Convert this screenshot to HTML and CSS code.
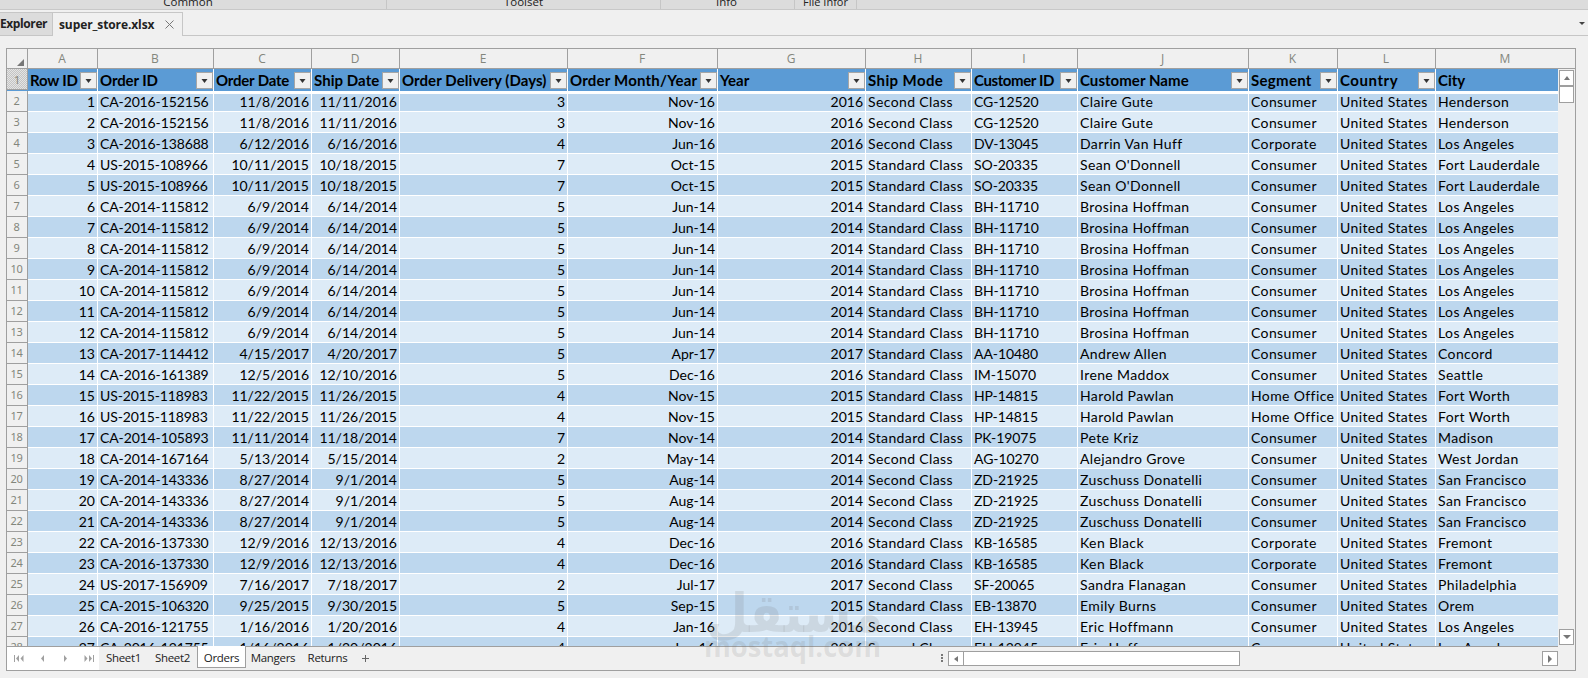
FILE: index.html
```html
<!DOCTYPE html>
<html lang="en">
<head>
<meta charset="utf-8">
<title>super_store.xlsx</title>
<link rel="stylesheet" href="styles.css">
</head>
<body>
<div class="ribbon">
  <div class="group g-common"><span>Common</span></div>
  <div class="group g-toolset"><span>Toolset</span></div>
  <div class="group g-info"><span>Info</span></div>
  <div class="group g-file"><span>File Infor</span></div>
</div>
<div class="doc-tabs">
  <div class="doc-tab explorer"><span>Explorer</span></div>
  <div class="doc-tab active"><span>super_store.xlsx</span>
    <svg class="close" width="9" height="9" viewBox="0 0 9 9"><path d="M.5.5l8 8M8.5.5l-8 8" stroke="#777" fill="none"/></svg>
  </div>
  <div class="tab-fill"><svg width="6" height="3" viewBox="0 0 6 3"><path d="M0 0h6L3 3z" fill="#444"/></svg></div>
</div>
<main class="sheet">
  <div class="letters" id="letters"></div>
  <div class="body">
    <div class="rows" id="rows"></div>
    <div class="vscroll">
      <div class="btn up"><svg width="6" height="4" viewBox="0 0 6 4"><path d="M0 4L3 0l3 4z" fill="#777"/></svg></div>
      <div class="vthumb"></div>
      <div class="btn down"><svg width="8" height="4" viewBox="0 0 8 4"><path d="M0 0h8L4 4z" fill="#777"/></svg></div>
    </div>
  </div>
  <div class="footer">
    <div class="nav">
      <svg width="10" height="7" viewBox="0 0 10 7"><path d="M0 0h1v7H0zM5 0v7L2 3.500zM9.500 0v7l-3-3.500z" fill="#a0a0a0"/></svg>
      <svg width="3" height="7" viewBox="0 0 3 7"><path d="M3 0v7L0 3.500z" fill="#a0a0a0"/></svg>
      <svg width="3" height="7" viewBox="0 0 3 7"><path d="M0 0v7l3-3.500z" fill="#a0a0a0"/></svg>
      <svg width="10" height="7" viewBox="0 0 10 7"><path d="M9 0h1v7H9zM.5 0v7l3-3.500zM5 0v7l3-3.500z" fill="#a0a0a0"/></svg>
    </div>
    <div class="sheet-tab s1">Sheet1</div>
    <div class="sheet-tab s2">Sheet2</div>
    <div class="sheet-tab current">Orders</div>
    <div class="sheet-tab s4">Mangers</div>
    <div class="sheet-tab s5">Returns</div>
    <svg class="plus" width="7" height="7" viewBox="0 0 7 7"><path d="M3 0h1v7H3zM0 3h7v1H0z" fill="#666"/></svg>
    <div class="hscroll">
      <svg class="dots" width="2" height="8" viewBox="0 0 2 8"><path d="M0 0h2v2H0zM0 3h2v2H0zM0 6h2v2H0z" fill="#777"/></svg>
      <div class="btn left"><svg width="4" height="6" viewBox="0 0 4 6"><path d="M4 0v6L0 3z" fill="#777"/></svg></div>
      <div class="hthumb"></div>
      <div class="btn right"><svg width="4" height="8" viewBox="0 0 4 8"><path d="M0 0v8l4-4z" fill="#777"/></svg></div>
    </div>
  </div>
</main>
<svg class="watermark" width="200" height="100" viewBox="0 0 200 100">
  <text class="wm-ar" x="11" y="57" textLength="177" lengthAdjust="spacingAndGlyphs">مستقل</text>
  <text class="wm-en" x="9" y="82" textLength="177" lengthAdjust="spacingAndGlyphs">mostaql.com</text>
</svg>
<script src="sheet.js"></script>
</body>
</html>
```
FILE: styles.css
```css
* { box-sizing: border-box; }
body {
  margin: 0;
  width: 1588px;
  height: 678px;
  overflow: hidden;
  background: #f0f0f0;
  font-family: "Open Sans", "Noto Sans", sans-serif;
  color: #222;
  position: relative;
}
svg { display: block; flex: none; }

.ribbon {
  display: flex;
  height: 10px;
  background: #dcdcdc;
  border-bottom: 1px solid #c8c8c8;
  overflow: hidden;
}
.group {
  display: flex;
  justify-content: center;
  align-items: flex-end;
  height: 9px;
  border-right: 1px solid #c6c6c6;
  font-size: 11.5px;
  line-height: 15px;
}
.g-common { width: 387px; padding-right: 10px; }
.g-toolset { width: 274px; }
.g-info { width: 134px; padding-right: 2px; }
.g-file { width: 62px; font-size: 11px; white-space: nowrap; }

.doc-tabs { display: flex; height: 26px; padding-top: 2px; font-size: 12px; font-weight: 700; line-height: 24px; }
.doc-tab { border: 1px solid #c6c6c6; display: flex; align-items: center; white-space: nowrap; }
.explorer { width: 53px; background: #dcdcdc; border-left: 0; letter-spacing: -.4px; }
.active { width: 130px; border-left: 0; border-bottom: 0; padding-left: 6px; letter-spacing: -.1px; justify-content: space-between; padding-right: 8px; }
.tab-fill { flex: 1; border-bottom: 1px solid #c6c6c6; display: flex; justify-content: flex-end; padding: 10px 3px 0 0; }

.sheet {
  width: 1570px;
  height: 623px;
  margin: 12px 0 0 6px;
  border: 1px solid #9f9f9f;
  background: #f0f0f0;
}
.letters, .row {
  display: grid;
  grid-template-columns: 21px 70px 116px 98px 88px 168px 150px 148px 106px 106px 171px 89px 98px 1fr;
}
.letters { height: 20px; border-bottom: 1px solid #9f9f9f; font-size: 12px; line-height: 20px; color: #83867c; text-align: center; }
.letters > div { border-right: 1px solid #9f9f9f; padding-right: 1px; }
.letters > div:last-child { border-right: 0; }
.letters > .corner { display: flex; justify-content: flex-end; align-items: flex-end; padding: 0 3px 3px 0; }

.body { display: flex; height: 577px; }
.rows { width: 1551px; height: 578px; overflow: hidden; border-bottom: 1px solid #9f9f9f; }
.row { height: 21px; font: 14px/22px Lato, "Open Sans", sans-serif; color: #000; }
.row:nth-child(even) { background: #bdd7ee; }
.row:nth-child(odd) { background: #ddebf7; }
.row > div { border-right: 1px solid #fff; border-bottom: 1px solid #fff; padding: 0 2px; white-space: nowrap; overflow: hidden; letter-spacing: .38px; }
.row > div:last-child { border-right: 0; }
.row > .num { text-align: right; letter-spacing: 0; }
.row > .c1 { letter-spacing: -.13px; }
.row > .c8 { letter-spacing: -.08px; }
.row > .head {
  background: #f0f0f0;
  border-right: 1px solid #9f9f9f;
  border-bottom: 1px solid #9f9f9f;
  font: 11px/20px "Noto Sans", sans-serif;
  color: #83867c;
  text-align: center;
  padding: 0 1px 0 0;
  letter-spacing: -.3px;
}
.row.titles { height: 22px; background: #5b9bd5; font-weight: 700; font-size: 15px; }
.row.titles > div { display: flex; justify-content: space-between; border-bottom: 3px solid #fff; padding: 0 0 0 2px; line-height: 22px; overflow: visible; }
.row.titles > .head {
  justify-content: center;
  padding: 0;
  border-bottom: 1px solid #9f9f9f;
  line-height: 21px;
  height: 21px;
  background: repeating-conic-gradient(#c4c4c4 0 25%, #e4e4e4 0 50%) 0 0 / 2px 2px;
}
.row.titles > .t0 { letter-spacing: -.2px; }
.row.titles > .t1 { letter-spacing: -.1px; }
.row.titles > .t2 { letter-spacing: -.2px; }
.row.titles > .t3 { letter-spacing: .05px; }
.row.titles > .t4 { letter-spacing: .07px; }
.row.titles > .t5 { letter-spacing: .2px; }
.row.titles > .t6 { letter-spacing: 0; }
.row.titles > .t7 { letter-spacing: .4px; }
.row.titles > .t8 { letter-spacing: -.4px; }
.row.titles > .t9 { letter-spacing: .05px; }
.row.titles > .t10 { letter-spacing: .3px; }
.row.titles > .t11 { letter-spacing: .55px; }
.row.titles > .t12 { letter-spacing: 0; }
.filter {
  width: 17px;
  height: 17px;
  margin-top: 3px;
  border: 1px solid #a6a6a6;
  background: #f0f0f0;
  display: flex;
  align-items: center;
  justify-content: center;
  flex: none;
}

.vscroll { width: 17px; padding: 1px 0 0 1px; display: flex; flex-direction: column; height: 577px; }
.btn { display: flex; align-items: center; justify-content: center; width: 15px; height: 16px; background: #fff; border: 1px solid #9f9f9f; }
.vthumb { width: 15px; height: 17px; background: #fff; border: 1px solid #9f9f9f; }
.down { margin: auto 0 1px; }

.footer { display: flex; height: 24px; padding-top: 1px; font-size: 11.5px; line-height: 21px; }
.nav { width: 92px; background: #fff; display: flex; align-items: center; padding-left: 7px; }
.nav svg:nth-child(2) { margin-left: 17px; }
.nav svg:nth-child(3) { margin-left: 20px; }
.nav svg:nth-child(4) { margin-left: 17px; }
.sheet-tab { white-space: nowrap; text-align: center; letter-spacing: -.3px; }
.s1 { width: 49px; }
.s2 { width: 49px; }
.current { width: 49px; height: 22px; margin-top: -1px; line-height: 23px; background: #fff; border: 1px solid #9f9f9f; border-top: 0; position: relative; }
.s4 { width: 54px; }
.s5 { width: 55px; }
.plus { margin: 8px 0 0 7px; }
.hscroll { margin-left: auto; display: flex; padding: 4px 17px 0 0; }
.dots { margin: 3px 5px 0 0; }
.hscroll .btn { width: 16px; height: 15px; }
.hthumb { width: 277px; height: 15px; margin-left: -1px; background: #fff; border: 1px solid #9f9f9f; }
.hscroll .right { margin-left: 302px; }

.watermark { position: absolute; left: 695px; top: 575px; fill: rgba(120, 120, 120, .17); }
.wm-ar { font: bold 54px "DejaVu Sans", sans-serif; direction: ltr; }
.wm-en { font: bold 28px "Open Sans", sans-serif; }
```
FILE: sheet.js
```js
const titles = ["Row ID", "Order ID", "Order Date", "Ship Date", "Order Delivery (Days)", "Order Month/Year", "Year", "Ship Mode", "Customer ID", "Customer Name", "Segment", "Country", "City"];
const numeric = [0, 2, 3, 4, 5, 6];
const orders = `CA-2016-152156|11/8/2016|11/11/2016|3|Nov-16|Second|CG-12520|Claire Gute|Consumer|Henderson
CA-2016-152156|11/8/2016|11/11/2016|3|Nov-16|Second|CG-12520|Claire Gute|Consumer|Henderson
CA-2016-138688|6/12/2016|6/16/2016|4|Jun-16|Second|DV-13045|Darrin Van Huff|Corporate|Los Angeles
US-2015-108966|10/11/2015|10/18/2015|7|Oct-15|Standard|SO-20335|Sean O'Donnell|Consumer|Fort Lauderdale
US-2015-108966|10/11/2015|10/18/2015|7|Oct-15|Standard|SO-20335|Sean O'Donnell|Consumer|Fort Lauderdale
CA-2014-115812|6/9/2014|6/14/2014|5|Jun-14|Standard|BH-11710|Brosina Hoffman|Consumer|Los Angeles
CA-2014-115812|6/9/2014|6/14/2014|5|Jun-14|Standard|BH-11710|Brosina Hoffman|Consumer|Los Angeles
CA-2014-115812|6/9/2014|6/14/2014|5|Jun-14|Standard|BH-11710|Brosina Hoffman|Consumer|Los Angeles
CA-2014-115812|6/9/2014|6/14/2014|5|Jun-14|Standard|BH-11710|Brosina Hoffman|Consumer|Los Angeles
CA-2014-115812|6/9/2014|6/14/2014|5|Jun-14|Standard|BH-11710|Brosina Hoffman|Consumer|Los Angeles
CA-2014-115812|6/9/2014|6/14/2014|5|Jun-14|Standard|BH-11710|Brosina Hoffman|Consumer|Los Angeles
CA-2014-115812|6/9/2014|6/14/2014|5|Jun-14|Standard|BH-11710|Brosina Hoffman|Consumer|Los Angeles
CA-2017-114412|4/15/2017|4/20/2017|5|Apr-17|Standard|AA-10480|Andrew Allen|Consumer|Concord
CA-2016-161389|12/5/2016|12/10/2016|5|Dec-16|Standard|IM-15070|Irene Maddox|Consumer|Seattle
US-2015-118983|11/22/2015|11/26/2015|4|Nov-15|Standard|HP-14815|Harold Pawlan|Home Office|Fort Worth
US-2015-118983|11/22/2015|11/26/2015|4|Nov-15|Standard|HP-14815|Harold Pawlan|Home Office|Fort Worth
CA-2014-105893|11/11/2014|11/18/2014|7|Nov-14|Standard|PK-19075|Pete Kriz|Consumer|Madison
CA-2014-167164|5/13/2014|5/15/2014|2|May-14|Second|AG-10270|Alejandro Grove|Consumer|West Jordan
CA-2014-143336|8/27/2014|9/1/2014|5|Aug-14|Second|ZD-21925|Zuschuss Donatelli|Consumer|San Francisco
CA-2014-143336|8/27/2014|9/1/2014|5|Aug-14|Second|ZD-21925|Zuschuss Donatelli|Consumer|San Francisco
CA-2014-143336|8/27/2014|9/1/2014|5|Aug-14|Second|ZD-21925|Zuschuss Donatelli|Consumer|San Francisco
CA-2016-137330|12/9/2016|12/13/2016|4|Dec-16|Standard|KB-16585|Ken Black|Corporate|Fremont
CA-2016-137330|12/9/2016|12/13/2016|4|Dec-16|Standard|KB-16585|Ken Black|Corporate|Fremont
US-2017-156909|7/16/2017|7/18/2017|2|Jul-17|Second|SF-20065|Sandra Flanagan|Consumer|Philadelphia
CA-2015-106320|9/25/2015|9/30/2015|5|Sep-15|Standard|EB-13870|Emily Burns|Consumer|Orem
CA-2016-121755|1/16/2016|1/20/2016|4|Jan-16|Second|EH-13945|Eric Hoffmann|Consumer|Los Angeles
CA-2016-121755|1/16/2016|1/20/2016|4|Jan-16|Second|EH-13945|Eric Hoffmann|Consumer|Los Angeles`.split("\n");

const corner = '<div class="corner"><svg width="7" height="7" viewBox="0 0 7 7"><path d="M7 0v7H0z" fill="#777"/></svg></div>';
document.getElementById("letters").innerHTML =
  corner + [..."ABCDEFGHIJKLM"].map(c => `<div>${c}</div>`).join("");

const arrow = '<div class="filter"><svg width="7" height="4" viewBox="0 0 7 4"><path d="M.5 0h6L3.500 4z" fill="#333"/></svg></div>';
let html = '<div class="row titles"><div class="head">1</div>' +
  titles.map((t, i) => `<div class="t${i}"><span>${t}</span>${i < 12 ? arrow : ""}</div>`).join("") + "</div>";

orders.forEach((line, n) => {
  const [id, date, ship, days, month, mode, cust, name, seg, city] = line.split("|");
  const cells = [n + 1, id, date, ship, days, month, id.slice(3, 7), mode + " Class", cust, name, seg, "United States", city];
  html += `<div class="row"><div class="head">${n + 2}</div>` +
    cells.map((c, i) => `<div class="c${i}${numeric.includes(i) ? " num" : ""}">${c}</div>`).join("") + "</div>";
});
document.getElementById("rows").innerHTML = html;
```
